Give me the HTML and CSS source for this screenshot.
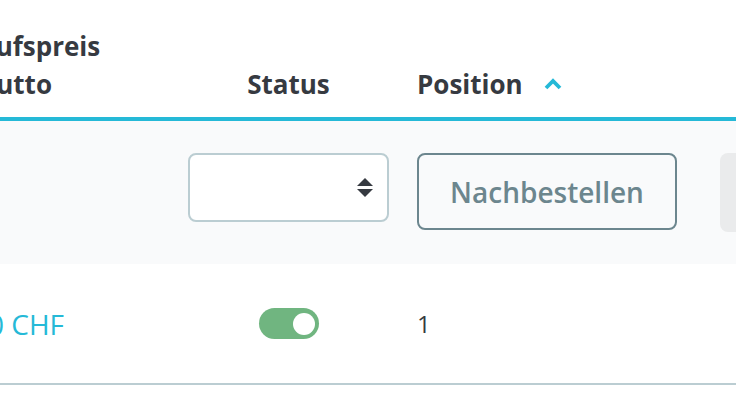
FILE: index.html
```html
<!DOCTYPE html>
<html lang="de">
<head>
<meta charset="utf-8">
<title>Produkte</title>
<link rel="stylesheet" href="styles.css">
</head>
<body>
<div class="table">
  <div class="row head">
    <div class="cell c-price">Verkaufspreis brutto</div>
    <div class="cell c-status">Status</div>
    <div class="cell c-pos">
      <span>Position</span>
      <svg class="chev" width="18" height="12" viewBox="0 0 18 12"><polyline points="2,10 9,3 16,10" fill="none" stroke="#25b9d7" stroke-width="3.8"/></svg>
    </div>
    <div class="cell c-act"></div>
  </div>
  <div class="row filter">
    <div class="cell c-price"></div>
    <div class="cell c-status">
      <div class="select">
        <svg class="arrows" width="16" height="20" viewBox="0 0 16 20"><polygon points="8,0 16,8 0,8" fill="#363a41"/><polygon points="0,11 16,11 8,19" fill="#363a41"/></svg>
      </div>
    </div>
    <div class="cell c-pos">
      <button class="btn-outline" type="button">Nachbestellen</button>
    </div>
    <div class="cell c-act">
      <div class="btn-gray"></div>
    </div>
  </div>
  <div class="row data">
    <div class="cell c-price price">100 CHF</div>
    <div class="cell c-status">
      <span class="toggle"><span class="knob"></span></span>
    </div>
    <div class="cell c-pos num">1</div>
    <div class="cell c-act"></div>
  </div>
</div>
</body>
</html>
```
FILE: styles.css
```css
html, body {
  margin: 0;
  padding: 0;
  background: #ffffff;
  overflow: hidden;
}
body {
  font-family: "Open Sans", "Noto Sans", sans-serif;
  color: #363a41;
  width: 736px;
  height: 406px;
}
.table {
  margin-left: -110px;
  width: 1000px;
}
.row {
  display: grid;
  grid-template-columns: 240px 287px 303px 170px;
}
.cell {
  box-sizing: border-box;
}
.c-price {
  text-align: center;
}
.c-status {
  padding-left: 30px;
  display: flex;
  justify-content: center;
}
.c-pos {
  display: flex;
  align-items: center;
}
.head {
  height: 117px;
  align-items: end;
  border-bottom: 4px solid #25b9d7;
  font-weight: 700;
  font-size: 26px;
  line-height: 38px;
  color: #363a41;
}
.head .cell {
  padding-bottom: 14px;
}
.head .c-pos {
  align-items: center;
}
.chev {
  margin-left: 21px;
  margin-top: -1px;
}
.filter {
  height: 143px;
  background: #f9fafb;
  padding-top: 32px;
  box-sizing: border-box;
  align-items: start;
}
.filter .c-pos {
  align-items: start;
}
.select {
  width: 201px;
  height: 69px;
  box-sizing: border-box;
  background: #ffffff;
  border: 2px solid #bbcdd2;
  border-radius: 8px;
  display: flex;
  align-items: center;
  justify-content: flex-end;
  padding-right: 14px;
}
.btn-outline {
  width: 260px;
  height: 77px;
  box-sizing: border-box;
  background: transparent;
  border: 2px solid #6c868e;
  border-radius: 8px;
  font-family: "Open Sans", "Noto Sans", sans-serif;
  font-weight: 600;
  font-size: 28px;
  color: #6c868e;
  padding: 0;
}
.btn-gray {
  width: 120px;
  height: 79px;
  background: #eaebec;
  border-radius: 8px;
}
.data {
  height: 121px;
  box-sizing: border-box;
  border-bottom: 2px solid #bbcdd2;
  align-items: center;
}
.price {
  color: #25b9d7;
  font-size: 28px;
}
.num {
  font-size: 24px;
  color: #363a41;
}
.toggle {
  width: 60px;
  height: 31px;
  border-radius: 16px;
  background: #70b580;
  display: flex;
  align-items: center;
  justify-content: flex-end;
  padding-right: 4px;
  box-sizing: border-box;
}
.knob {
  width: 22px;
  height: 22px;
  border-radius: 50%;
  background: #ffffff;
}
```
